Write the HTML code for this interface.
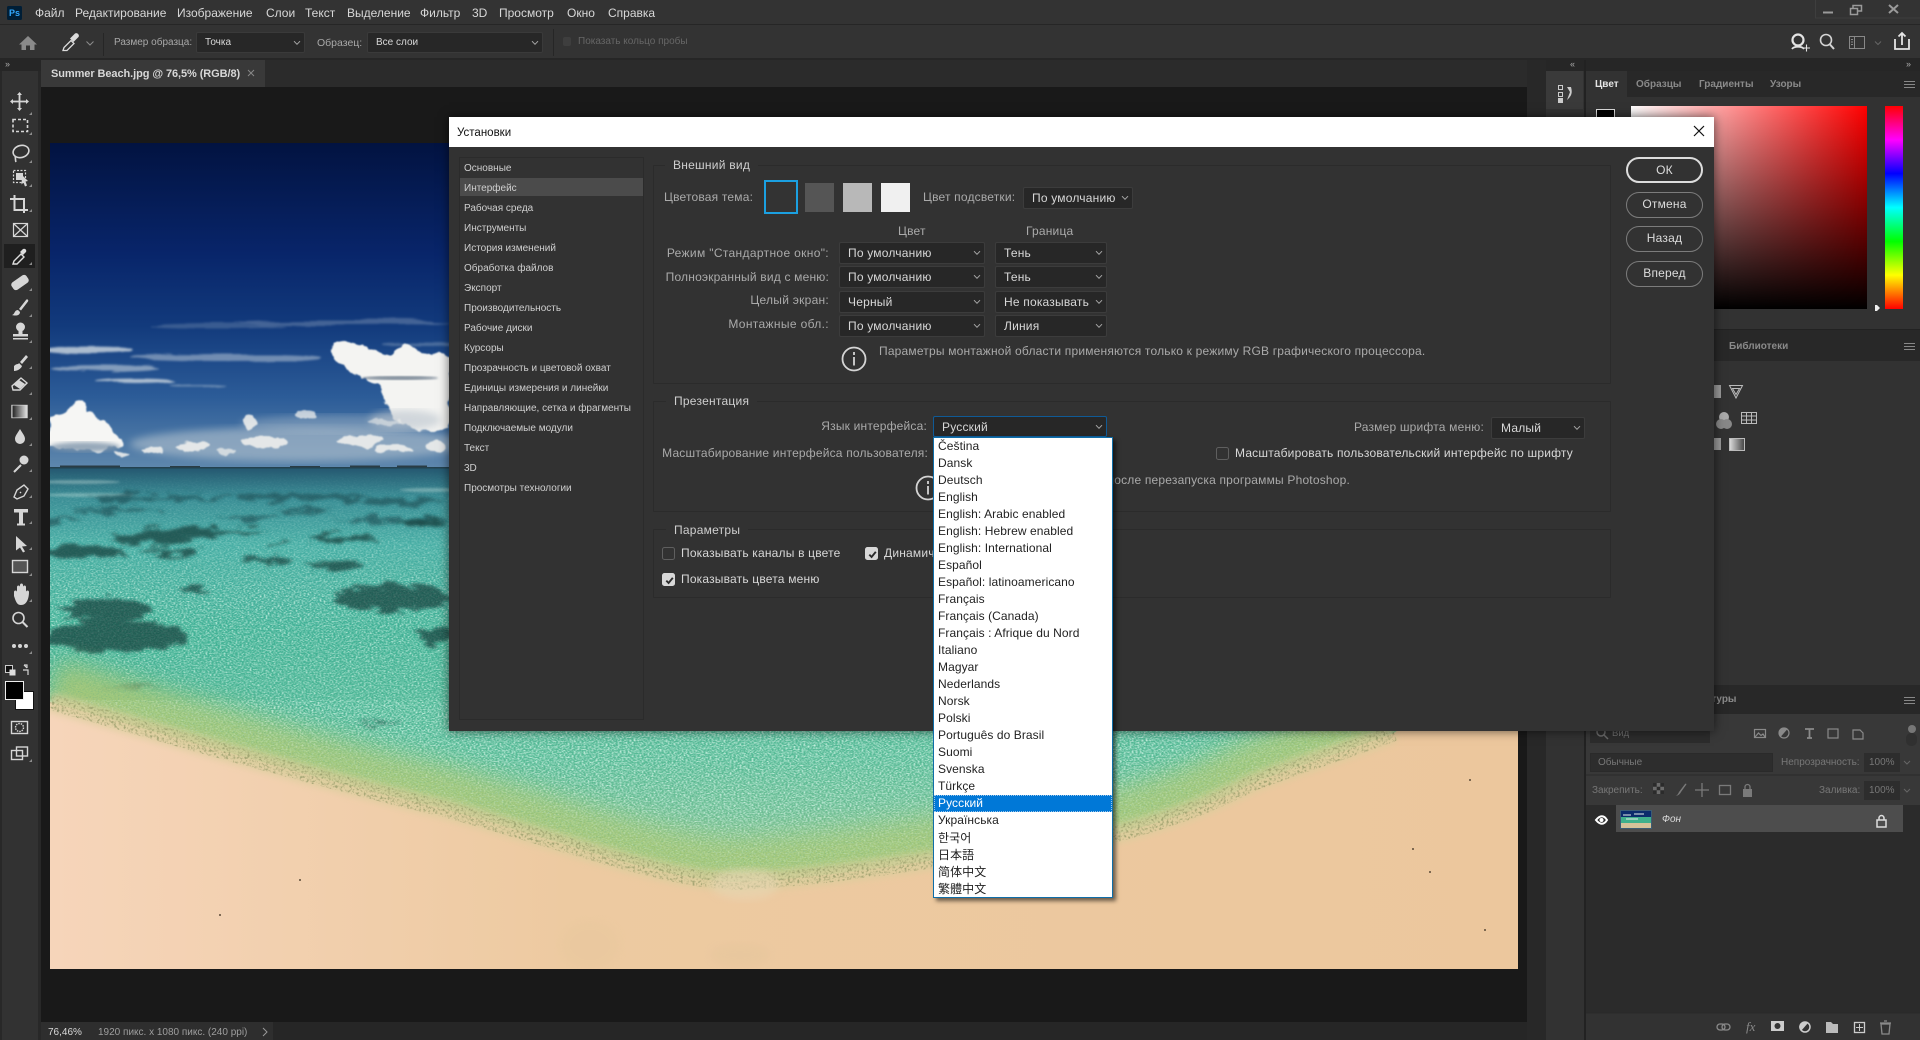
<!DOCTYPE html>
<html lang="ru"><head><meta charset="utf-8"><title>Photoshop</title>
<style>
html,body{margin:0;padding:0;width:1920px;height:1040px;overflow:hidden;background:#282828}
body{position:relative;font-family:"Liberation Sans","Noto Sans CJK SC",sans-serif;font-size:12px;color:#ccc}
div{box-sizing:border-box}
.a{position:absolute}
.t{position:absolute;white-space:nowrap;line-height:16px;height:16px}
.m{color:#d8d8d8;font-size:12px;top:5px}
.o{font-size:10px;color:#a8a8a8}
.l{font-size:10px;color:#cfcfcf;left:464px}
.d{font-size:12px;color:#aaa;letter-spacing:.19px}
.r{text-align:right}
.sel{position:absolute;background:#272727;border:1px solid #3c3c3c;border-radius:2px;color:#d8d8d8;font-size:12px;letter-spacing:.2px;line-height:20px;white-space:nowrap}
.sel span{position:absolute;left:8px;top:0}
.sel svg{position:absolute;right:3px;top:7px}
.fs{position:absolute;border:1px solid #2b2b2b;left:653px;width:958px;border-radius:1px}
.lg{position:absolute;background:#323232;padding:0 8px;line-height:16px;color:#cfcfcf;font-size:12px;letter-spacing:.25px;white-space:nowrap}
.btn{position:absolute;left:1626px;width:77px;height:26px;border:1.5px solid #7c7c7c;border-radius:13px;color:#ddd;text-align:center;line-height:23px;font-size:12px;letter-spacing:.2px}
.pop{position:absolute;left:933px;top:437px;width:180px;height:461px;background:#fff;border:1px solid #0f6ea8;box-shadow:3px 3px 4px rgba(0,0,0,.55);color:#222;font-size:12px;letter-spacing:.08px;z-index:8;font-family:"Liberation Sans","Noto Sans CJK JP",sans-serif}
.pop div{height:17px;line-height:17px;padding-left:4px;white-space:nowrap}
.pop .s{background:#0078d7;color:#fff;outline:1px dotted #9cc6ea;outline-offset:-1px}
.cb{position:absolute;width:13px;height:13px;border:1px solid #5f5f5f;border-radius:2.5px}
.cb.c{background:#d8d8d8;border-color:#d8d8d8}
.cb svg{position:absolute;left:1px;top:1px}
</style></head><body>
<svg width="0" height="0" style="position:absolute"><defs>
<symbol id="ch" viewBox="0 0 8 6"><path d="M1 1.200L4 4.300L7 1.200" fill="none" stroke="#a8a8a8" stroke-width="1"/></symbol>
<symbol id="ck" viewBox="0 0 11 11"><path d="M2.300 5.600L4.600 8L8.800 2.800" fill="none" stroke="#2a2a2a" stroke-width="1.900"/></symbol>
<filter id="b1"><feGaussianBlur stdDeviation="1"/></filter>
<filter id="b2"><feGaussianBlur stdDeviation="2.200"/></filter>
<filter id="b4"><feGaussianBlur stdDeviation="4"/></filter>
<filter id="b12" x="-20%" y="-60%" width="140%" height="220%"><feGaussianBlur stdDeviation="12"/></filter>
<filter id="fl" x="-15%" y="-25%" width="130%" height="150%"><feTurbulence type="fractalNoise" baseFrequency=".07" numOctaves="3" seed="3"/><feDisplacementMap in="SourceGraphic" scale="10" xChannelSelector="R" yChannelSelector="G"/><feGaussianBlur stdDeviation=".8"/></filter>
<filter id="ws" x="-10%" y="-60%" width="120%" height="220%"><feTurbulence type="fractalNoise" baseFrequency=".012 .12" numOctaves="3" seed="8"/><feDisplacementMap in="SourceGraphic" scale="10" xChannelSelector="R" yChannelSelector="G"/><feGaussianBlur stdDeviation="1.100"/></filter>
<filter id="pt" x="-10%" y="-30%" width="120%" height="160%"><feTurbulence type="fractalNoise" baseFrequency=".05 .18" numOctaves="3" seed="11"/><feDisplacementMap in="SourceGraphic" scale="18" xChannelSelector="R" yChannelSelector="G"/><feGaussianBlur stdDeviation="1.500"/></filter>
<filter id="spk" x="0" y="0" width="100%" height="100%"><feTurbulence type="fractalNoise" baseFrequency=".5 .75" numOctaves="2" seed="4"/><feColorMatrix values="0 0 0 0 .8 0 0 0 0 1 0 0 0 0 .9 1.700 1.700 0 0 -1.450"/></filter>
<filter id="spd" x="0" y="0" width="100%" height="100%"><feTurbulence type="fractalNoise" baseFrequency=".6 .8" numOctaves="2" seed="9"/><feColorMatrix values="0 0 0 0 .08 0 0 0 0 .36 0 0 0 0 .26 1.800 1.800 0 0 -1.700"/></filter>
<filter id="foam" x="-5%" y="-20%" width="110%" height="140%"><feTurbulence type="fractalNoise" baseFrequency=".42" numOctaves="2" seed="7"/><feColorMatrix values="0 0 0 0 0 0 0 0 0 0 0 0 0 0 0 2.600 2.600 0 0 -2.500" result="m"/><feComposite in="SourceGraphic" in2="m" operator="in"/></filter>
<linearGradient id="ng" x1="0" y1="0" x2="0" y2="1"><stop offset="0" stop-color="#000"/><stop offset=".14" stop-color="#555"/><stop offset=".3" stop-color="#fff"/><stop offset=".8" stop-color="#ddd"/><stop offset="1" stop-color="#888"/></linearGradient>
<mask id="nm" maskUnits="userSpaceOnUse" x="50" y="470" width="1468" height="420"><rect x="50" y="470" width="1468" height="420" fill="url(#ng)"/></mask>
<linearGradient id="sky" x1="0" y1="0" x2="0" y2="1"><stop offset="0" stop-color="#021341"/><stop offset=".34" stop-color="#08256a"/><stop offset=".56" stop-color="#123a7c"/><stop offset=".78" stop-color="#2c5c98"/><stop offset="1" stop-color="#5f88ad"/></linearGradient>
<linearGradient id="wat" x1="0" y1="0" x2="0" y2="1"><stop offset="0" stop-color="#24566f"/><stop offset=".07" stop-color="#3a8d95"/><stop offset=".18" stop-color="#48aea5"/><stop offset=".38" stop-color="#40b296"/><stop offset=".68" stop-color="#58bc97"/><stop offset=".86" stop-color="#7ac294"/><stop offset="1" stop-color="#9cc884"/></linearGradient>
<linearGradient id="snd" x1="0" y1="0" x2="1" y2="0"><stop offset="0" stop-color="#f6d5ba"/><stop offset=".35" stop-color="#edcaa1"/><stop offset="1" stop-color="#ecc79d"/></linearGradient>
<linearGradient id="hue" x1="0" y1="0" x2="0" y2="1"><stop offset="0" stop-color="#f00"/><stop offset=".167" stop-color="#f0f"/><stop offset=".333" stop-color="#00f"/><stop offset=".5" stop-color="#0ff"/><stop offset=".667" stop-color="#0f0"/><stop offset=".833" stop-color="#ff0"/><stop offset="1" stop-color="#f00"/></linearGradient>
<clipPath id="ph"><rect x="50" y="143" width="1468" height="826"/></clipPath>
<clipPath id="wclip"><path d="M50 467H1518V640L1394 733C1350 750 1300 765 1253 783C1210 805 1170 820 1120 833C1070 845 1000 850 935 860C880 868 800 880 736 882C660 880 560 840 440 808C300 775 150 730 50 702Z"/></clipPath>
</defs></svg>

<!-- base bars -->
<div class="a" style="left:0;top:0;width:1920px;height:24px;background:#333"></div>
<div class="a" style="left:0;top:24px;width:1920px;height:1px;background:#262626"></div>
<div class="a" style="left:0;top:25px;width:1920px;height:33px;background:#333"></div>
<div class="a" style="left:0;top:58px;width:1920px;height:13px;background:#262626"></div>
<div class="a" style="left:41px;top:60px;width:1486px;height:27px;background:#2b2b2b"></div>
<div class="a" style="left:41px;top:60px;width:224px;height:27px;background:#393939"></div>
<div class="a" style="left:41px;top:87px;width:1486px;height:935px;background:#191919"></div>
<div class="a" style="left:41px;top:1022px;width:1486px;height:18px;background:#262626"></div>
<div class="a" style="left:41px;top:1022px;width:232px;height:18px;background:#2e2e2e"></div>
<div class="a" style="left:1527px;top:60px;width:19px;height:980px;background:#282828"></div>
<div class="a" style="left:1546px;top:71px;width:38px;height:969px;background:#323232"></div>
<div class="a" style="left:1584px;top:60px;width:2px;height:980px;background:#222"></div>
<div class="a" style="left:1586px;top:71px;width:334px;height:969px;background:#323232"></div>
<div class="a" style="left:2px;top:71px;width:36px;height:969px;background:#323232"></div>

<!-- menu -->
<svg class="a" style="left:7px;top:6px" width="15" height="14"><rect width="15" height="14" rx="1.500" fill="#001e36"/></svg>
<div class="t" style="left:9px;top:5px;font-size:9px;font-weight:bold;color:#31a8ff">Ps</div>
<div class="t m" style="left:35px">Файл</div><div class="t m" style="left:75px">Редактирование</div><div class="t m" style="left:177px">Изображение</div><div class="t m" style="left:266px">Слои</div><div class="t m" style="left:305px">Текст</div><div class="t m" style="left:347px">Выделение</div><div class="t m" style="left:420px">Фильтр</div><div class="t m" style="left:472px">3D</div><div class="t m" style="left:499px">Просмотр</div><div class="t m" style="left:567px">Окно</div><div class="t m" style="left:608px">Справка</div>

<!-- window controls and top right -->
<svg class="a" style="left:1800px;top:0" width="120" height="60" fill="none" stroke="#9a9a9a">
<path d="M15.500 0V18H120" stroke="#3e3e3e"/>
<path d="M23 12.500H33" stroke-width="2"/><rect x="50.500" y="8.500" width="7" height="6" stroke-width="1.500"/><path d="M53 8V5.500H61.500V11H58" stroke-width="1.500"/>
<path d="M89 5L98 13M98 5L89 13" stroke-width="2"/>
</svg>
<svg class="a" style="left:1786px;top:30px" width="134" height="24" fill="none">
<circle cx="12" cy="10" r="5.500" stroke="#e4e4e4" stroke-width="2.200"/><path d="M6 19c2-3 10-3 12 0" stroke="#e4e4e4" stroke-width="1.800"/><path d="M17 18h7M20.500 14.500v7" stroke="#e4e4e4" stroke-width="1.100"/>
<circle cx="40" cy="10" r="5.500" stroke="#d4d4d4" stroke-width="1.600"/><path d="M44 14.500L48 19" stroke="#d4d4d4" stroke-width="2"/>
<rect x="63.500" y="6.500" width="15" height="12" stroke="#888"/><path d="M68.500 7v11" stroke="#888"/><path d="M65 9.500h2M65 12h2M65 14.500h2" stroke="#888"/>
<path d="M89 11.500l3 3 3-3" stroke="#666"/>
<path d="M109 9v10h14V9M116 15V4M112.500 6.500L116 3L119.500 6.500" stroke="#e4e4e4" stroke-width="1.800"/>
</svg>

<!-- options bar -->
<svg class="a" style="left:0;top:28px" width="110" height="28" fill="none">
<path d="M28 8L19 16.500H21.500V22H26V17.500H30V22H34.500V16.500H37Z" fill="#8a8a8a"/>
<path d="M63 22.500l1-3 7-7 3 3-7 7z" stroke="#dcdcdc" stroke-width="1.300"/><path d="M70 10.500l5-5c2-1.500 5 1.500 3.500 3.500l-5 5z" fill="#dcdcdc"/>
<path d="M86.500 13.500l3.500 3.500 3.500-3.500" stroke="#8c8c8c"/><path d="M103.500 5v24" stroke="#262626"/>
</svg>
<div class="t o" style="left:114px;top:35px">Размер образца:</div>
<div class="sel" style="left:196px;top:32px;width:109px;height:21px;font-size:10px;letter-spacing:0;border-color:#3a3a3a"><span>Точка</span><svg width="8" height="6"><use href="#ch"/></svg></div>
<div class="t o" style="left:317px;top:35px;font-size:10.500px">Образец:</div>
<div class="sel" style="left:367px;top:32px;width:176px;height:21px;font-size:10px;letter-spacing:0;border-color:#3a3a3a"><span>Все слои</span><svg width="8" height="6"><use href="#ch"/></svg></div>
<div class="a" style="left:553px;top:29px;width:1px;height:27px;background:#262626"></div>
<div class="a" style="left:563px;top:37px;width:8px;height:9px;background:#3e3e3e;border-radius:2px"></div>
<div class="t" style="left:578px;top:34px;font-size:10px;color:#666">Показать кольцо пробы</div>

<!-- tab -->
<div class="t" style="left:5px;top:56px;font-size:9px;color:#aaa;letter-spacing:-1px">››</div>
<div class="t" style="left:51px;top:66px;font-size:11px;font-weight:bold;letter-spacing:-.08px;color:#d8d8d8">Summer Beach.jpg @ 76,5% (RGB/8)</div>
<svg class="a" style="left:247px;top:69px" width="8" height="8"><path d="M1 1l6 6M7 1l-6 6" stroke="#888"/></svg>

<!-- photo -->
<svg class="a" style="left:0;top:0" width="1920" height="1040">
<g clip-path="url(#ph)">
<rect x="50" y="143" width="1468" height="326" fill="url(#sky)"/>
<g fill="#c4d0dc" filter="url(#ws)">
<ellipse cx="90" cy="350" rx="42" ry="3.500" opacity=".85"/><ellipse cx="105" cy="368" rx="55" ry="3.500" opacity=".6"/><ellipse cx="135" cy="381" rx="40" ry="3" opacity=".85"/><ellipse cx="225" cy="358" rx="95" ry="4" opacity=".5"/><ellipse cx="340" cy="322" rx="110" ry="3" opacity=".28"/><ellipse cx="220" cy="326" rx="70" ry="2.500" opacity=".22"/><ellipse cx="200" cy="386" rx="28" ry="1.500" opacity=".45"/><ellipse cx="420" cy="345" rx="40" ry="2" opacity=".3"/></g>
<ellipse cx="300" cy="444" rx="170" ry="17" fill="#b3c2cf" opacity=".6" filter="url(#b4)"/>
<ellipse cx="340" cy="424" rx="100" ry="9" fill="#b3c2cf" opacity=".4" filter="url(#b4)"/>
<!-- big right cloud -->
<g filter="url(#fl)"><path d="M333 340c12 0 20 4 30 5 10 4 16 8 26 11 4-6 10-10 18-9 8 0 13 3 18 8 7-2 16-2 24 2V430H420c-14-2-24-12-32-22-6-12-4-22-16-26-14-5-28-12-38-24-3-6-4-12-1-18z" fill="#f4f4f2"/></g>
<ellipse cx="400" cy="378" rx="38" ry="2" fill="#5c6d80" opacity=".75" filter="url(#b1)"/>
<ellipse cx="405" cy="420" rx="36" ry="10" fill="#b9c3cc" opacity=".6" filter="url(#b4)"/>
<!-- left cloud -->
<g filter="url(#fl)"><path d="M50 418c6-3 15-6 20-8 2-5 8-9 12-8 4 1 6 5 6 9 5 2 8 6 12 9 5 2 8 8 13 12 4 6 8 10 8 13-8 4-20 7-32 6-15 0-28-2-39-4z" fill="#f6f6f4"/></g>
<ellipse cx="85" cy="447" rx="35" ry="5" fill="#7f95ab" opacity=".8" filter="url(#b2)"/>
<!-- horizon clouds -->
<g fill="#f1f1ee" opacity=".88" filter="url(#fl)">
<ellipse cx="250" cy="422" rx="7" ry="6"/><ellipse cx="265" cy="442" rx="24" ry="6"/><ellipse cx="192" cy="446" rx="17" ry="4"/><ellipse cx="152" cy="451" rx="11" ry="3"/><ellipse cx="122" cy="453" rx="7" ry="2.500"/><ellipse cx="226" cy="452" rx="9" ry="3" opacity=".8"/><ellipse cx="306" cy="415" rx="11" ry="4" opacity=".85"/><ellipse cx="360" cy="441" rx="22" ry="6"/><ellipse cx="395" cy="449" rx="18" ry="4"/><ellipse cx="436" cy="446" rx="9" ry="5"/><ellipse cx="385" cy="421" rx="18" ry="3" opacity=".6"/></g>
<!-- water -->
<rect x="50" y="467" width="1468" height="430" fill="url(#wat)"/>
<path d="M60 465.500h60v1.500H60zM170 466h30v1H170zM290 466h30v1h-30zM350 465.500h30v1.500h-30zM397 465.500h30v1.500h-30z" fill="#2a3c44"/>
<rect x="50" y="467" width="1468" height="1.500" fill="#24424f"/>
<rect x="50" y="470" width="1468" height="420" filter="url(#spk)" opacity=".72" mask="url(#nm)"/>
<g fill="#d8eee6" opacity=".35" filter="url(#b1)"><ellipse cx="80" cy="482" rx="40" ry="2"/><ellipse cx="90" cy="495" rx="45" ry="2"/><ellipse cx="430" cy="490" rx="30" ry="2"/></g>
<g fill="#163f46" opacity=".55" filter="url(#pt)">
<ellipse cx="160" cy="498" rx="70" ry="3"/><ellipse cx="300" cy="497" rx="80" ry="3"/><ellipse cx="120" cy="510" rx="50" ry="2"/><ellipse cx="400" cy="502" rx="40" ry="4"/><ellipse cx="60" cy="519" rx="20" ry="2.500"/><ellipse cx="250" cy="518" rx="35" ry="2.500"/><ellipse cx="390" cy="520" rx="60" ry="2.500"/><ellipse cx="300" cy="510" rx="30" ry="2"/></g>
<g fill="#173f3c" opacity=".74" filter="url(#pt)">
<ellipse cx="83" cy="552" rx="42" ry="7"/><ellipse cx="150" cy="539" rx="42" ry="5"/><ellipse cx="203" cy="532" rx="62" ry="4"/><ellipse cx="170" cy="552" rx="30" ry="3"/><ellipse cx="267" cy="560" rx="26" ry="2.500"/><ellipse cx="337" cy="566" rx="30" ry="3.500"/><ellipse cx="393" cy="598" rx="58" ry="13"/><ellipse cx="107" cy="609" rx="46" ry="11"/><ellipse cx="117" cy="636" rx="72" ry="17"/><ellipse cx="437" cy="635" rx="20" ry="8"/><ellipse cx="193" cy="590" rx="16" ry="3"/><ellipse cx="340" cy="539" rx="36" ry="4"/><ellipse cx="280" cy="543" rx="14" ry="2"/><ellipse cx="420" cy="523" rx="25" ry="3"/><ellipse cx="130" cy="687" rx="28" ry="2" opacity=".7"/><ellipse cx="380" cy="722" rx="22" ry="2" opacity=".7"/></g>
<g clip-path="url(#wclip)">
<path d="M50 696C150 724 300 770 440 802C560 834 660 874 736 876C800 874 880 862 935 854C1000 844 1070 839 1120 827C1170 814 1210 799 1253 777C1300 759 1350 744 1394 727" fill="none" stroke="#a6c878" stroke-width="72" opacity=".95" filter="url(#b12)"/>
<rect x="50" y="560" width="1468" height="330" filter="url(#spd)" opacity=".3"/>
<rect x="50" y="700" width="1468" height="190" filter="url(#spk)" opacity=".3"/>
</g>
<path d="M50 702C150 730 300 775 440 808C560 840 660 880 736 882C800 880 880 868 935 860C1000 850 1070 845 1120 833C1170 820 1210 805 1253 783C1300 765 1350 750 1394 733L1518 640V969H50Z" fill="url(#snd)"/>
<path d="M50 702C150 730 300 775 440 808C560 840 660 880 736 882C800 880 880 868 935 860C1000 850 1070 845 1120 833C1170 820 1210 805 1253 783C1300 765 1350 750 1394 733" fill="none" stroke="#d9cf9c" stroke-width="18" opacity=".85" filter="url(#b4)"/>
<path d="M50 702C150 730 300 775 440 808C560 840 660 880 736 882C800 880 880 868 935 860C1000 850 1070 845 1120 833C1170 820 1210 805 1253 783C1300 765 1350 750 1394 733" fill="none" stroke="#8a9260" stroke-width="16" opacity=".65" filter="url(#foam)"/>
<ellipse cx="745" cy="884" rx="34" ry="16" fill="#e8d8b6" opacity=".5" filter="url(#b4)"/>
<ellipse cx="590" cy="945" rx="30" ry="25" fill="#e3c69a" opacity=".25" filter="url(#b4)"/>
<ellipse cx="740" cy="955" rx="30" ry="12" fill="#dfc39a" opacity=".3" filter="url(#b4)"/>
<g fill="#5a4a38"><circle cx="1413" cy="849" r="1"/><circle cx="1430" cy="872" r="1"/><circle cx="1485" cy="930" r="1"/><circle cx="1470" cy="780" r="1"/><circle cx="220" cy="915" r="1"/><circle cx="300" cy="880" r="1"/></g>
</g>
<!-- colour picker -->
<linearGradient id="cpx" x1="0" y1="0" x2="1" y2="0"><stop offset="0" stop-color="#fff"/><stop offset="1" stop-color="#f00"/></linearGradient>
<linearGradient id="cpy" x1="0" y1="0" x2="0" y2="1"><stop offset="0" stop-color="#000" stop-opacity="0"/><stop offset="1" stop-color="#000"/></linearGradient>
<rect x="1631" y="106" width="236" height="203" fill="url(#cpx)"/><rect x="1631" y="106" width="236" height="203" fill="url(#cpy)"/>
<rect x="1885" y="106" width="18" height="203" fill="url(#hue)"/>
<path d="M1875 305h2l3 3-3 3h-2z" fill="#eee"/>
<rect x="1596.500" y="109.500" width="18" height="20" fill="#000" stroke="#ddd"/>
<!-- panel headers -->
<rect x="1586" y="71" width="334" height="26" fill="#282828"/><rect x="1586" y="71" width="41" height="35" fill="#323232"/>
<rect x="1546" y="71" width="37" height="38" fill="#3a3a3a"/>
<g fill="none" stroke="#ccc"><rect x="1558.500" y="85.500" width="4" height="4"/><rect x="1558.500" y="92.500" width="4" height="4"/></g><rect x="1558" y="98" width="5" height="5" fill="#ccc"/>
<path d="M1567 87h4c1 4 2 8-4 13l3-8z" fill="#ccc"/>
<path d="M1904 81.500h11M1904 84.500h11M1904 87.500h11" stroke="#888"/>
<rect x="1586" y="330" width="334" height="31" fill="#282828"/><rect x="1586" y="329" width="334" height="1" fill="#222"/>
<path d="M1904 343.500h11M1904 346.500h11M1904 349.500h11" stroke="#888"/>
<path d="M1729.500 385.500h13L1736 398zM1732.500 388.500h7l-3.500 6z" fill="none" stroke="#bbb"/>
<path d="M1741.500 412.500h15v11h-15zM1741.500 416h15M1741.500 420h15M1746.500 412v12M1751.500 412v12" fill="none" stroke="#bbb"/>
<circle cx="1724" cy="417" r="5" fill="#aaa"/><circle cx="1721" cy="424" r="5" fill="#888"/><circle cx="1727" cy="424" r="5" fill="#888"/>
<linearGradient id="gs"><stop offset="0" stop-color="#ddd"/><stop offset="1" stop-color="#444"/></linearGradient>
<rect x="1729.500" y="438.500" width="15" height="12" fill="url(#gs)" stroke="#bbb"/>
<path d="M1714 385h7v13h-7zM1714 438h7v12h-7z" fill="#999"/>
<!-- layers header -->
<rect x="1586" y="685" width="334" height="29" fill="#282828"/>
<rect x="1586" y="714" width="334" height="91" fill="#383838"/>
<rect x="1590" y="722" width="120" height="21" fill="#2c2c2c"/>
<rect x="1586" y="805" width="334" height="208" fill="#2b2b2b"/>
<rect x="1586" y="1013" width="334" height="27" fill="#323232"/>
<path d="M1586 775h334M1586 1013h334" stroke="#2a2a2a"/>
<path d="M1904 697.500h11M1904 700.500h11M1904 703.500h11" stroke="#888"/>
<rect x="1616" y="805" width="287" height="27" fill="#4d4d4d"/>
<rect x="1620.500" y="810.500" width="31" height="18" fill="#d5c29a" stroke="#3c5c74"/>
<rect x="1621" y="811" width="30" height="6" fill="#0b2c6c"/><rect x="1621" y="817" width="30" height="6" fill="#3fb08c"/>
<path d="M1623 815h8M1634 814h10M1626 819h12" stroke="#e6f0ea"/>
<g fill="none" stroke="#fff" stroke-width="2"><path d="M1596 820c4-5 8-5 11 0-3 5-7 5-11 0z"/></g><circle cx="1601.500" cy="820" r="2" fill="#fff"/>
<g fill="none" stroke="#ddd" stroke-width="1.500"><rect x="1877" y="820" width="9" height="7"/><path d="M1879 820v-2a2.500 2.500 0 015 0v2"/></g>
<g fill="none" stroke="#6a6a6a" stroke-width="1.500"><circle cx="1601" cy="732" r="4"/><path d="M1604 735l4 4"/></g>
<g fill="none" stroke="#8a8a8a" stroke-width="1.200">
<rect x="1754.500" y="729.500" width="11" height="8"/><path d="M1755 737l3.500-4 2.500 2.500 2-1.500 2 3" /><circle cx="1784" cy="733" r="5"/><path d="M1805 729h9M1809.500 729v9M1807 738h5" stroke-width="1.800"/><rect x="1828" y="729" width="10" height="9"/><path d="M1853 730h7l3 3v6h-10z"/>
</g>
<path d="M1780.500 737a5 5 0 017-8z" fill="#8a8a8a"/>
<rect x="1908" y="725" width="8" height="8" rx="4" fill="#777"/><rect x="1906" y="733" width="11" height="13" rx="5" fill="#303030" opacity=".9"/>
<rect x="1653" y="783" width="11" height="11" fill="#6c6c6c"/><path d="M1653 783h3.700v3.700h-3.700zM1660.300 783h3.700v3.700h-3.700zM1656.700 786.700h3.600v3.600h-3.600zM1653 790.300h3.700v3.700h-3.700zM1660.300 790.300h3.700v3.700h-3.700z" fill="#2b2b2b"/>
<path d="M1675 796c2 0 3-2 4-4l6-8c1-1 2 0 1 1l-5 7c-1 2-3 4-6 4z" fill="#7a7a7a"/>
<g fill="none" stroke="#7a7a7a" stroke-width="1.300"><path d="M1702 783v14M1695 790h14"/><rect x="1719.500" y="785.500" width="11" height="9"/></g><rect x="1743" y="789" width="9" height="8" fill="#7a7a7a"/><path d="M1745 789v-2a2.500 2.500 0 015 0v2" fill="none" stroke="#7a7a7a" stroke-width="1.300"/>
<path d="M1764 761l3 3 3-3M1904 761l3 3 3-3M1904 789l3 3 3-3" fill="none" stroke="#666"/>
<g fill="none" stroke="#8a8a8a" stroke-width="1.300"><rect x="1717" y="1024" width="8" height="6" rx="3"/><rect x="1722" y="1024" width="8" height="6" rx="3"/></g>
<path d="M1771 1021h13v10h-13z" fill="#ccc"/><circle cx="1777.500" cy="1026" r="3" fill="#333"/>
<circle cx="1805" cy="1027" r="5" fill="none" stroke="#ccc" stroke-width="1.500"/><path d="M1801 1031a5 5 0 017-8z" fill="#ccc"/>
<path d="M1826 1022h5l2 2h5v9h-12z" fill="#bbb"/>
<rect x="1854.500" y="1022.500" width="10" height="10" fill="none" stroke="#ccc" stroke-width="1.300"/><path d="M1859.500 1024v7M1856 1027.500h7" stroke="#ccc"/>
<g fill="none" stroke="#8a8a8a" stroke-width="1.300"><path d="M1881 1024h9l-1 10h-7zM1880 1023h11M1884 1021h3"/></g>
<!-- tools -->
<g fill="none" stroke="#d6d6d6" stroke-width="1.600">
<path d="M19.500 93v17M11 101.500h17" stroke-width="1.800"/><path d="M17 95l2.500-3 2.500 3zM17 108l2.500 3 2.500-3zM13 99l-3 2.500 3 2.500zM26 99l3 2.500-3 2.500z" fill="#d6d6d6" stroke="none"/>
<rect x="13" y="119.500" width="14.500" height="12" stroke-dasharray="3 2"/>
<ellipse cx="21" cy="151.500" rx="8" ry="6" transform="rotate(-15 21 151.500)"/><path d="M15 156c1 3 0 4 1 6"/>
<rect x="13.500" y="170.500" width="12" height="12" stroke-dasharray="2 1.500" stroke-width="1.200"/>
<path d="M14.500 195v15h13.500M10 199h14v14" stroke-width="2"/>
<rect x="13.500" y="223.500" width="14" height="13" stroke-width="1.200"/><path d="M14 224l13 12M27 224l-13 12" stroke-width="1.200"/>
</g>
<rect x="16" y="173" width="7" height="7" fill="#d6d6d6"/><path d="M22 175l6 6-2.500.5 1.500 4-2 1-1.500-4-2 2z" fill="#d6d6d6"/>
<rect x="4" y="244" width="31" height="24" fill="#1f1f1f"/>
<path d="M13 264l1-3 7-7 3 3-7 7z" fill="none" stroke="#ddd" stroke-width="1.400"/><path d="M20 252l3-3c2-1 4 1 3 3l-3 3z" fill="#ddd"/>
<g fill="#d6d6d6">
<rect x="11" y="278" width="18" height="9" rx="3" transform="rotate(-35 20 282.500)"/>
<path d="M12 315c3-.5 2-5 6-5l2 2c0 4-5 4-8 3zM19 309l7-9c1-1.500 3 0 2 1.500l-7 9z"/>
<circle cx="20.500" cy="327" r="4.500"/><path d="M18.500 330h4v4h-4zM13 334h15v2.500H13zM13 338h15v1.500H13z"/>
<path d="M14 366c3-3 4-1 5-3l3 3c-1 3-5 5-8 5zM20 362l6-7 2 2-6 7z"/>
<path d="M12 386l9-8 6 5-7 7h-7z" fill="none" stroke="#d6d6d6" stroke-width="1.400"/><path d="M19 380l6 4-5 5-6-4z"/>
<path d="M20 429c-3 5-5 7-5 10a5 5 0 0010 0c0-3-2-5-5-10z"/>
<circle cx="24" cy="460" r="4.500"/><path d="M21 465l-7 7" stroke="#d6d6d6" stroke-width="2"/>
<path d="M14 509h14v3.500h-5v11h2v2h-8v-2h2v-11h-5z"/>
<path d="M16 536l11 10-5 .5 3 5-2 1-3-5-4 3z"/>
<path d="M14 596v-4c0-2 3-2 3 0v-5c0-2 3-2 3 0v-2c0-2 3-2 3 0v2c0-2 3-2 3 0v5c0-2 3-2 3 0 0 6-2 13-8 13-4 0-5-3-7-9z"/>
<circle cx="14" cy="646" r="2"/><circle cx="20" cy="646" r="2"/><circle cx="26" cy="646" r="2"/>
</g>
<g fill="none" stroke="#d6d6d6" stroke-width="1.400">
<path d="M14 497l3-7 7-5 4 4-4 7-7 3z"/><path d="M20 493l1-1"/>
<rect x="12.500" y="560.500" width="15" height="12" fill="#555"/>
<circle cx="18.500" cy="618" r="5.500" stroke-width="1.600"/><path d="M22.500 622l5 5" stroke-width="2"/>
<rect x="12" y="405.500" width="15" height="12"/>
<rect x="11.500" y="721.500" width="16" height="12"/><circle cx="19.500" cy="727.500" r="4" stroke-dasharray="1.500 1"/>
<rect x="11.500" y="750.500" width="11" height="9"/><rect x="16.500" y="747" width="11" height="9"/>
<path d="M24 665h3v3M24 665l3 3M23 670h5v5" stroke-width="1.200"/>
</g>
<linearGradient id="tg"><stop offset="0" stop-color="#222"/><stop offset="1" stop-color="#ddd"/></linearGradient>
<rect x="12.500" y="405.500" width="14" height="12" fill="url(#tg)"/>
<rect x="5.500" y="665.500" width="7" height="7" fill="#111" stroke="#ccc"/><rect x="9.500" y="669.500" width="6" height="6" fill="#ddd"/>
<rect x="15.500" y="691.500" width="18" height="18" fill="#fff" stroke="#111"/>
<rect x="5.500" y="681.500" width="18" height="18" fill="#000" stroke="#eee"/>
<g fill="#8c8c8c"><path d="M32 115v-3l-3 3zM32 135v-3l-3 3zM32 163v-3l-3 3zM32 187v-3l-3 3zM32 212v-3l-3 3zM32 265v-3l-3 3zM32 291v-3l-3 3zM32 317v-3l-3 3zM32 343v-3l-3 3zM32 369v-3l-3 3zM32 395v-3l-3 3zM32 420v-3l-3 3zM32 446v-3l-3 3zM32 472v-3l-3 3zM32 498v-3l-3 3zM32 524v-3l-3 3zM32 550v-3l-3 3zM32 576v-3l-3 3zM32 602v-3l-3 3zM32 654v-3l-3 3zM32 762v-3l-3 3z"/></g>
</svg>

<!-- right text -->
<div class="t" style="left:1570px;top:56px;font-size:9px;color:#aaa;letter-spacing:-1px">‹‹</div>
<div class="t" style="left:1906px;top:56px;font-size:9px;color:#aaa;letter-spacing:-1px">››</div>
<div class="t" style="left:1595px;top:77px;font-size:10px;font-weight:bold;color:#e4e4e4">Цвет</div>
<div class="t" style="left:1636px;top:77px;font-size:10px;font-weight:bold;color:#8a8a8a">Образцы</div>
<div class="t" style="left:1699px;top:77px;font-size:10px;font-weight:bold;color:#8a8a8a">Градиенты</div>
<div class="t" style="left:1770px;top:77px;font-size:10px;font-weight:bold;color:#8a8a8a">Узоры</div>
<div class="t" style="left:1729px;top:339px;font-size:10px;font-weight:bold;color:#8a8a8a">Библиотеки</div>
<div class="t" style="left:1693px;top:692px;font-size:10px;font-weight:bold;color:#8a8a8a">Контуры</div>
<div class="t" style="left:1612px;top:726px;font-size:9.500px;color:#6f6f6f">Вид</div>
<div class="a" style="left:1590px;top:753px;width:183px;height:19px;background:#2d2d2d;border:1px solid #2a2a2a"></div>
<div class="t" style="left:1598px;top:755px;font-size:10px;color:#777">Обычные</div>
<div class="t" style="left:1781px;top:755px;font-size:10px;color:#777">Непрозрачность:</div>
<div class="a" style="left:1864px;top:753px;width:36px;height:19px;background:#2d2d2d"></div>
<div class="t" style="left:1869px;top:755px;font-size:10px;color:#777">100%</div>
<div class="t" style="left:1592px;top:783px;font-size:10px;color:#777">Закрепить:</div>
<div class="t" style="left:1819px;top:783px;font-size:10px;color:#777">Заливка:</div>
<div class="a" style="left:1864px;top:781px;width:36px;height:19px;background:#2d2d2d"></div>
<div class="t" style="left:1869px;top:783px;font-size:10px;color:#777">100%</div>
<div class="t" style="left:1662px;top:812px;font-size:10px;font-style:italic;color:#ddd">Фон</div>
<div class="t" style="left:1746px;top:1019px;font-size:13px;font-style:italic;font-family:'Liberation Serif',serif;color:#888">fx</div>
<!-- status -->
<div class="t" style="left:48px;top:1025px;font-size:10px;color:#d8d8d8">76,46%</div>
<div class="t" style="left:98px;top:1025px;font-size:10px;color:#9e9e9e">1920 пикс. x 1080 пикс. (240 ppi)</div>
<svg class="a" style="left:262px;top:1027px" width="6" height="10"><path d="M1 1l4 4-4 4" fill="none" stroke="#999"/></svg>

<!-- dialog -->
<div class="a" style="left:449px;top:117px;width:1265px;height:614px;background:#323232;box-shadow:0 0 10px rgba(0,0,0,.6);z-index:4"></div>
<div class="a" style="left:449px;top:117px;width:1265px;height:30px;background:#fff;z-index:4"></div>
<div id="dlg" class="a" style="left:0;top:0;width:1920px;height:1040px;z-index:5">
<div class="t" style="left:457px;top:125px;font-size:11.500px;color:#111">Установки</div>
<svg class="a" style="left:1693px;top:125px" width="12" height="12"><path d="M1 1l10 10M11 1L1 11" stroke="#111" stroke-width="1.200"/></svg>
<!-- list -->
<div class="a" style="left:459px;top:157px;width:185px;height:563px;border:1px solid #2b2b2b"></div>
<div class="a" style="left:460px;top:178px;width:183px;height:18px;background:#4b4b4b"></div>
<div class="t l" style="top:161px">Основные</div><div class="t l" style="top:181px">Интерфейс</div><div class="t l" style="top:201px">Рабочая среда</div><div class="t l" style="top:221px">Инструменты</div><div class="t l" style="top:241px">История изменений</div><div class="t l" style="top:261px">Обработка файлов</div><div class="t l" style="top:281px">Экспорт</div><div class="t l" style="top:301px">Производительность</div><div class="t l" style="top:321px">Рабочие диски</div><div class="t l" style="top:341px">Курсоры</div><div class="t l" style="top:361px">Прозрачность и цветовой охват</div><div class="t l" style="top:381px">Единицы измерения и линейки</div><div class="t l" style="top:401px">Направляющие, сетка и фрагменты</div><div class="t l" style="top:421px">Подключаемые модули</div><div class="t l" style="top:441px">Текст</div><div class="t l" style="top:461px">3D</div><div class="t l" style="top:481px">Просмотры технологии</div>
<!-- fieldsets -->
<div class="fs" style="top:165px;height:219px"></div>
<div class="lg" style="left:665px;top:157px">Внешний вид</div>
<div class="fs" style="top:401px;height:111px"></div>
<div class="lg" style="left:666px;top:393px">Презентация</div>
<div class="fs" style="top:529px;height:69px"></div>
<div class="lg" style="left:666px;top:522px">Параметры</div>
<div class="t d" style="left:664px;top:189px">Цветовая тема:</div>
<div class="a" style="left:764px;top:180px;width:34px;height:34px;border:2px solid #1ba0e1;background:#333"></div>
<div class="a" style="left:805px;top:183px;width:29px;height:29px;background:#555"></div>
<div class="a" style="left:843px;top:183px;width:29px;height:29px;background:#b8b8b8"></div>
<div class="a" style="left:881px;top:183px;width:29px;height:29px;background:#f0f0f0"></div>
<div class="t d" style="left:923px;top:189px">Цвет подсветки:</div>
<div class="sel" style="left:1023px;top:187px;width:110px;height:22px"><span>По умолчанию</span><svg width="8" height="6"><use href="#ch"/></svg></div>
<div class="t d" style="left:898px;top:223px">Цвет</div><div class="t d" style="left:1026px;top:223px">Граница</div>
<div class="t d r" style="width:300px;left:529px;top:245px;letter-spacing:.34px">Режим "Стандартное окно":</div>
<div class="t d r" style="width:300px;left:529px;top:269px">Полноэкранный вид с меню:</div>
<div class="t d r" style="width:300px;left:529px;top:292px;letter-spacing:.26px">Целый экран:</div>
<div class="t d r" style="width:300px;left:529px;top:316px;letter-spacing:.35px">Монтажные обл.:</div>
<div class="sel" style="left:839px;top:242px;width:146px;height:22px"><span>По умолчанию</span><svg width="8" height="6"><use href="#ch"/></svg></div>
<div class="sel" style="left:995px;top:242px;width:112px;height:22px"><span>Тень</span><svg width="8" height="6"><use href="#ch"/></svg></div>
<div class="sel" style="left:839px;top:266px;width:146px;height:22px"><span>По умолчанию</span><svg width="8" height="6"><use href="#ch"/></svg></div>
<div class="sel" style="left:995px;top:266px;width:112px;height:22px"><span>Тень</span><svg width="8" height="6"><use href="#ch"/></svg></div>
<div class="sel" style="left:839px;top:291px;width:146px;height:22px"><span>Черный</span><svg width="8" height="6"><use href="#ch"/></svg></div>
<div class="sel" style="left:995px;top:291px;width:112px;height:22px"><span>Не показывать</span><svg width="8" height="6"><use href="#ch"/></svg></div>
<div class="sel" style="left:839px;top:315px;width:146px;height:22px"><span>По умолчанию</span><svg width="8" height="6"><use href="#ch"/></svg></div>
<div class="sel" style="left:995px;top:315px;width:112px;height:22px"><span>Линия</span><svg width="8" height="6"><use href="#ch"/></svg></div>
<svg class="a" style="left:840px;top:345px" width="28" height="28" fill="none" stroke="#d4d4d4" stroke-width="1.800"><circle cx="14" cy="14" r="11.500"/><path d="M14 12v8.500"/><path d="M14 7v3"/></svg>
<div class="t d" style="left:879px;top:343px">Параметры монтажной области применяются только к режиму RGB графического процессора.</div>
<div class="t d r" style="width:300px;left:627px;top:418px">Язык интерфейса:</div>
<div class="t d r" style="width:300px;left:628px;top:445px">Масштабирование интерфейса пользователя:</div>
<div class="sel" style="left:933px;top:416px;width:174px;height:21px;border-color:#0f5a96"><span>Русский</span><svg width="8" height="6"><use href="#ch"/></svg></div>
<svg class="a" style="left:914px;top:474px" width="28" height="28" fill="none" stroke="#d4d4d4" stroke-width="1.800"><circle cx="14" cy="14" r="11.500"/><path d="M14 12v8.500"/><path d="M14 7v3"/></svg>
<div class="t d r" style="left:750px;width:600px;top:472px">Изменения вступят в силу после перезапуска программы Photoshop.</div>
<div class="t d r" style="left:1184px;width:300px;top:419px">Размер шрифта меню:</div>
<div class="sel" style="left:1491px;top:417px;width:94px;height:22px"><span style="left:9px">Малый</span><svg width="8" height="6"><use href="#ch"/></svg></div>
<div class="cb" style="left:1216px;top:447px"></div>
<div class="t d" style="left:1235px;top:445px;color:#d8d8d8">Масштабировать пользовательский интерфейс по шрифту</div>
<div class="cb" style="left:662px;top:547px"></div>
<div class="t d" style="left:681px;top:545px;color:#d8d8d8">Показывать каналы в цвете</div>
<div class="cb c" style="left:865px;top:547px"><svg width="11" height="11"><use href="#ck"/></svg></div>
<div class="t d" style="left:884px;top:545px;color:#d8d8d8">Динамические ползунки</div>
<div class="cb c" style="left:662px;top:573px"><svg width="11" height="11"><use href="#ck"/></svg></div>
<div class="t d" style="left:681px;top:571px;color:#d8d8d8">Показывать цвета меню</div>
<div class="btn" style="top:157px;border:2px solid #ddd;line-height:22px">ОК</div>
<div class="btn" style="top:192px">Отмена</div>
<div class="btn" style="top:226px">Назад</div>
<div class="btn" style="top:261px">Вперед</div>
</div>

<!-- popup -->
<div class="pop">
<div>Čeština</div><div>Dansk</div><div>Deutsch</div><div>English</div><div>English: Arabic enabled</div><div>English: Hebrew enabled</div><div>English: International</div><div>Español</div><div>Español: latinoamericano</div><div>Français</div><div>Français (Canada)</div><div>Français : Afrique du Nord</div><div>Italiano</div><div>Magyar</div><div>Nederlands</div><div>Norsk</div><div>Polski</div><div>Português do Brasil</div><div>Suomi</div><div>Svenska</div><div>Türkçe</div><div class="s">Русский</div><div>Українська</div><div style="font-family:'Noto Sans CJK KR',sans-serif">한국어</div><div style="font-family:'Noto Sans CJK JP',sans-serif">日本語</div><div style="font-family:'Noto Sans CJK SC',sans-serif">简体中文</div><div style="font-family:'Noto Sans CJK TC',sans-serif">繁體中文</div>
</div>
</body></html>
